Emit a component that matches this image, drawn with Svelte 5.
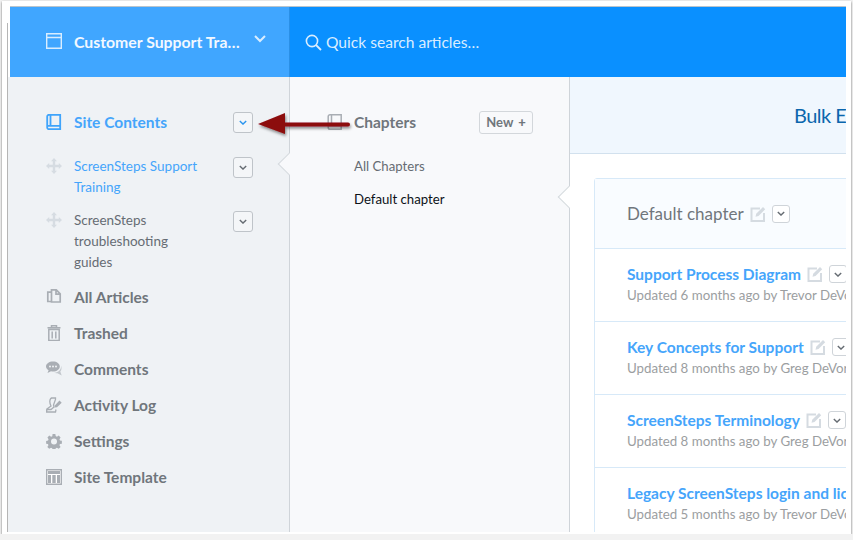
<script>
	const sites = [
		{ name: 'ScreenSteps Support Training', active: true },
		{ name: 'ScreenSteps troubleshooting guides', active: false }
	];
	const links = [
		{ name: 'All Articles', icon: 'copy' },
		{ name: 'Trashed', icon: 'trash' },
		{ name: 'Comments', icon: 'chat' },
		{ name: 'Activity Log', icon: 'log' },
		{ name: 'Settings', icon: 'gear' },
		{ name: 'Site Template', icon: 'template' }
	];
	const articles = [
		{ title: 'Support Process Diagram', meta: 'Updated 6 months ago by Trevor DeVore' },
		{ title: 'Key Concepts for Support', meta: 'Updated 8 months ago by Greg DeVore' },
		{ title: 'ScreenSteps Terminology', meta: 'Updated 8 months ago by Greg DeVore' },
		{ title: 'Legacy ScreenSteps login and license', meta: 'Updated 5 months ago by Trevor DeVore' }
	];
</script>

{#snippet chevron()}
	<svg viewBox="0 0 10 6" width="8" height="5"><path d="M1 1l4 4 4-4" fill="none" stroke="currentColor" stroke-width="1.7" /></svg>
{/snippet}

{#snippet edit()}
	<svg class="edit" viewBox="0 0 16 16" width="16" height="16">
		<path d="M10 2.500H1.500v12.500h12.500V7" fill="none" stroke="#d5dbe1" stroke-width="2" />
		<path d="M5.500 10.800l.7-3L13 1l2.200 2.200-6.700 6.900z" fill="#d5dbe1" />
	</svg>
{/snippet}

<div class="sheet">
	<div class="window">
		<header class="top">
			<div class="brand">
				<svg viewBox="0 0 16 16" width="16" height="16"><path d="M.7.7h14.600v14.600H.7zM.7 4.500h14.600" fill="none" stroke="#d9edff" stroke-width="1.400" /></svg>
				<span class="brand-name">Customer Support Tra…</span>
				<svg class="brand-chev" viewBox="0 0 12 8" width="12" height="8"><path d="M1 1l5 5 5-5" fill="none" stroke="#d9edff" stroke-width="2" /></svg>
			</div>
			<div class="search">
				<svg viewBox="0 0 17 17" width="17" height="17"><circle cx="7" cy="7" r="5.600" fill="none" stroke="#d9edff" stroke-width="1.600" /><path d="M11 11l5 5" stroke="#d9edff" stroke-width="1.800" /></svg>
				<span>Quick search articles…</span>
			</div>
		</header>

		<div class="body">
			<aside class="side">
				<div class="side-head">
					<svg class="ico" viewBox="0 0 16 16" width="16" height="16"><path d="M3 .8h11.200v14.400H3A1.800 1.800 0 0 1 1.200 13.400V2.600A1.800 1.800 0 0 1 3 .8zM1.500 11.800h12.700M4.500 1v10.500" fill="none" stroke="#3fa4fb" stroke-width="1.800" /></svg>
					<span class="side-title">Site Contents</span>
					<button class="chev blue">{@render chevron()}</button>
				</div>
				{#each sites as site}
					<div class="site" class:active={site.active}>
						<svg class="ico" viewBox="0 0 16 16" width="16" height="16">
							<path d="M8 0l3 3.200H9.200v3.600h3.600V5l3.200 3-3.200 3V9.200H9.200v3.600H11L8 16l-3-3.200h1.800V9.200H3.200V11L0 8l3.200-3v1.800h3.600V3.200H5z" fill="#d6dce2" />
						</svg>
						<span class="site-name">{site.name}</span>
						<button class="chev">{@render chevron()}</button>
					</div>
				{/each}
				<nav class="links">
					{#each links as link}
						<div class="link">
							<svg class="ico" viewBox="0 0 16 16" width="16" height="16">
								{#if link.icon === 'copy'}
									<path d="M5.500 3.200H1.800v9.300h3.700M5.500.9h4.800l3.900 4v8.100H5.500zM10 1v4.200h4.200" fill="none" stroke="#a9aeb4" stroke-width="1.700" />
								{:else if link.icon === 'trash'}
									<path d="M2.800 4.500h10.400v11H2.800zM6.200 6.500v7M9.800 6.500v7M1.500 2.800h13M5.500 2.500V.8h5v1.700" fill="none" stroke="#a9aeb4" stroke-width="1.500" />
								{:else if link.icon === 'chat'}
									<path d="M7 .5c3.800 0 6.800 2.100 6.800 5s-3 5-6.800 5c-.7 0-1.300 0-2-.2L1.500 12l1.100-2.700C1 8.400 0 7 0 5.500 0 2.600 3.200.5 7 .5z" fill="#a9aeb4" />
									<circle cx="4" cy="5.500" r="1" fill="#eff2f5" /><circle cx="7" cy="5.500" r="1" fill="#eff2f5" /><circle cx="10" cy="5.500" r="1" fill="#eff2f5" />
									<path d="M15 4.500c.8 2.500.7 4.500-.7 6l1.400 4-4.200-2.300c-1.200.2-2.500 0-3.500-.4 3.500 0 7.500-2.500 7-7.300z" fill="#c2c7cc" />
								{:else if link.icon === 'log'}
									<path d="M5 1h4.500v1.500L7.500 8l.5 2-3 2.500H1L.5 15h9l.5-2.500M5 1C3.500 3 3.500 6 5 9L.8 12l-.3 3" fill="none" stroke="#a9aeb4" stroke-width="1.300" />
									<path d="M8.500 10.500L9 8.200l4.500-4.700 2.200 2.200-4.700 4.500z" fill="#a9aeb4" />
								{:else if link.icon === 'gear'}
									<path d="M6.500.5h3l.4 2.200 1.300.6 2-1.200 2 2.100-1.200 1.900.5 1.400 2.100.4v3l-2.100.4-.5 1.300 1.200 2-2 2-2-1.200-1.300.5-.4 2.200h-3l-.4-2.200-1.300-.5-2 1.200-2-2 1.200-2-.5-1.300L-.5 11V8l2.100-.4.500-1.400L.9 4.300l2-2.100 2 1.200 1.300-.6z" transform="translate(.6 .6) scale(.92)" fill="#a9aeb4" />
									<circle cx="8" cy="8.500" r="3" fill="#eff2f5" />
								{:else}
									<path d="M.7.700h14.600v14.600H.7z" fill="#fff" stroke="#a9aeb4" stroke-width="1.400" />
									<path d="M2 2h12v3H2zM2 6h3v8H2zM6.300 6h3.400v8H6.300zM11 6h3v8h-3z" fill="#a9aeb4" />
								{/if}
							</svg>
							<span>{link.name}</span>
						</div>
					{/each}
				</nav>
				<i class="notch"></i>
			</aside>

			<section class="chapters">
				<div class="chap-head">
					<svg class="ico" viewBox="0 0 16 16" width="16" height="16"><path d="M3 .8h11.200v14.400H3A1.800 1.800 0 0 1 1.200 13.400V2.600A1.800 1.800 0 0 1 3 .8zM1.500 11.800h12.700M4.500 1v10.500" fill="none" stroke="#a9aeb4" stroke-width="1.500" /></svg>
					<span class="chap-title">Chapters</span>
					<button class="new">New <b>+</b></button>
				</div>
				<div class="chap all">All Chapters</div>
				<div class="chap current">Default chapter</div>
				<i class="notch second"></i>
			</section>

			<main class="main">
				<div class="bulk">Bulk Edit</div>
				<div class="card">
					<div class="card-head">
						<span>Default chapter</span>
						{@render edit()}
						<button class="chev small">{@render chevron()}</button>
					</div>
					{#each articles as article}
						<div class="row">
							<div class="row-title">
								<a href="#top">{article.title}</a>
								{@render edit()}
								<button class="chev small">{@render chevron()}</button>
							</div>
							<div class="row-meta">{article.meta}</div>
						</div>
					{/each}
				</div>
			</main>
		</div>

		<svg class="arrow" viewBox="0 0 100 30" width="100" height="30">
			<defs>
				<filter id="drop" x="-10%" y="-30%" width="120%" height="170%"><feDropShadow dx="1" dy="2" stdDeviation="1.500" flood-color="#000" flood-opacity=".45" /></filter>
			</defs>
			<path d="M1 12L28 1v9.500h63a1.800 1.800 0 0 1 0 4H28V22z" fill="#8c0a0e" filter="url(#drop)" />
		</svg>
	</div>
</div>

<style>
	:global(body) {
		background: #f2f2f2;
		overflow: hidden;
	}
	.sheet {
		box-sizing: border-box;
		width: 849px;
		height: 533px;
		margin: 1px 0 0 2px;
		padding: 5px 5px 0;
		background: #fff;
		box-shadow: 0 1px 2px #666;
	}
	.window {
		position: relative;
		box-sizing: border-box;
		width: 839px;
		height: 526px;
		padding-left: 1px;
		overflow: hidden;
		font-family: Lato, "Open Sans", sans-serif;
		color: #666c73;
		display: flex;
		flex-direction: column;
	}
	.window::before {
		content: '';
		position: absolute;
		left: 0;
		top: 17px;
		bottom: 0;
		width: 1px;
		background: #b5b5b5;
	}
	button {
		font-family: inherit;
		padding: 0;
	}
	.ico,
	.edit {
		flex: none;
	}
	.top {
		flex: none;
		display: flex;
		box-sizing: border-box;
		height: 71px;
		margin-left: 2px;
		background: #0a90ff;
		border-top: 1px solid #b9c4cc;
	}
	.brand {
		flex: none;
		box-sizing: border-box;
		width: 280px;
		padding: 0 0 2px 36px;
		display: flex;
		align-items: center;
		background: #40a6ff;
		border-right: 1px solid #2a8fe6;
	}
	.brand-name {
		margin-left: 12px;
		font-size: 15.800px;
		font-weight: 700;
		color: #f2f8ff;
		white-space: nowrap;
	}
	.brand-chev {
		margin: -4px 0 0 14px;
	}
	.search {
		display: flex;
		align-items: center;
		gap: 4px;
		padding-left: 15px;
		font-size: 15.600px;
		color: #d9edff;
	}
	.body {
		flex: 1;
		min-height: 0;
		display: flex;
	}
	.side {
		position: relative;
		flex: none;
		box-sizing: border-box;
		width: 282px;
		padding: 34px 36px 0 38px;
		background: #eff2f5;
		border-right: 1px solid #cfd4d9;
	}
	.side-head {
		display: flex;
		align-items: center;
		gap: 12px;
		height: 22px;
		margin-bottom: 23px;
	}
	.side-title {
		flex: 1;
		font-size: 15.500px;
		font-weight: 700;
		color: #45a5fb;
	}
	.chev {
		flex: none;
		box-sizing: border-box;
		width: 20px;
		height: 21px;
		display: flex;
		align-items: center;
		justify-content: center;
		background: #f4f6f8;
		border: 1px solid #bfc4c9;
		border-radius: 3px;
		color: #666c73;
	}
	.chev.blue {
		color: #2b95ee;
	}
	.site {
		display: flex;
		align-items: flex-start;
		gap: 12px;
		font-size: 13.500px;
		line-height: 21px;
		margin-bottom: 12px;
	}
	.site .ico {
		margin-top: 2px;
	}
	.site .chev {
		margin-top: 1px;
	}
	.site-name {
		flex: 1;
		padding-right: 16px;
	}
	.site.active .site-name {
		color: #45a5fb;
	}
	.links {
		margin-top: -6px;
	}
	.link {
		display: flex;
		align-items: center;
		gap: 12px;
		height: 36px;
		font-size: 15.500px;
		font-weight: 700;
		color: #70767c;
	}
	.notch {
		position: absolute;
		right: -8px;
		top: 79px;
		width: 16px;
		height: 16px;
		box-sizing: border-box;
		background: #f8f9fb;
		border-left: 1px solid #d5dade;
		border-bottom: 1px solid #d5dade;
		transform: rotate(45deg);
	}
	.chapters {
		position: relative;
		flex: none;
		box-sizing: border-box;
		width: 280px;
		padding: 34px 36px 0 37px;
		background: #f8f9fb;
		border-right: 1px solid #cfd4d9;
	}
	.chap-head {
		display: flex;
		align-items: center;
		gap: 11px;
		height: 22px;
		margin-bottom: 17px;
	}
	.chap-title {
		flex: 1;
		font-size: 15.500px;
		font-weight: 700;
		color: #70767c;
	}
	.new {
		box-sizing: border-box;
		width: 54px;
		height: 23px;
		background: #f8f9fb;
		border: 1px solid #d3d7db;
		border-radius: 3px;
		font-size: 13px;
		font-weight: 700;
		color: #70767c;
	}
	.new b {
		margin-left: 2px;
	}
	.chap {
		padding-left: 27px;
		font-size: 13.200px;
		line-height: 33px;
	}
	.chap.current {
		color: #0c1218;
	}
	.notch.second {
		top: 112px;
		background: #fff;
	}
	.main {
		flex: 1;
		min-width: 0;
		background: #fff;
		overflow: hidden;
	}
	.bulk {
		box-sizing: border-box;
		height: 77px;
		padding: 26px 0 0 224px;
		background: #f0f7fe;
		border-bottom: 1px solid #d2e1ee;
		font-size: 20px;
		line-height: 24px;
		letter-spacing: -0.5px;
		color: #0b66ad;
		white-space: nowrap;
	}
	.card {
		width: 300px;
		margin: 24px 0 0 24px;
		border: 1px solid #d7e9f8;
		border-radius: 3px;
	}
	.card-head {
		display: flex;
		align-items: center;
		gap: 6px;
		box-sizing: border-box;
		height: 70px;
		padding-left: 32px;
		background: #f9fcff;
		border-bottom: 1px solid #d7e9f8;
		font-size: 17px;
		color: #70767c;
	}
	.chev.small {
		width: 18px;
		height: 18px;
		background: #fff;
		border-color: #cfd4d9;
	}
	.row {
		box-sizing: border-box;
		height: 73px;
		padding: 14px 0 0 32px;
		border-bottom: 1px solid #d7e9f8;
		white-space: nowrap;
	}
	.row-title {
		display: flex;
		align-items: center;
		gap: 6px;
		height: 22px;
	}
	.row-title a {
		font-size: 15.500px;
		font-weight: 700;
		color: #45a5fb;
		text-decoration: none;
	}
	.row-meta {
		margin-top: 1px;
		font-size: 13.300px;
		line-height: 19px;
		color: #9b9ea1;
	}
	.arrow {
		position: absolute;
		left: 250px;
		top: 106px;
	}
</style>
